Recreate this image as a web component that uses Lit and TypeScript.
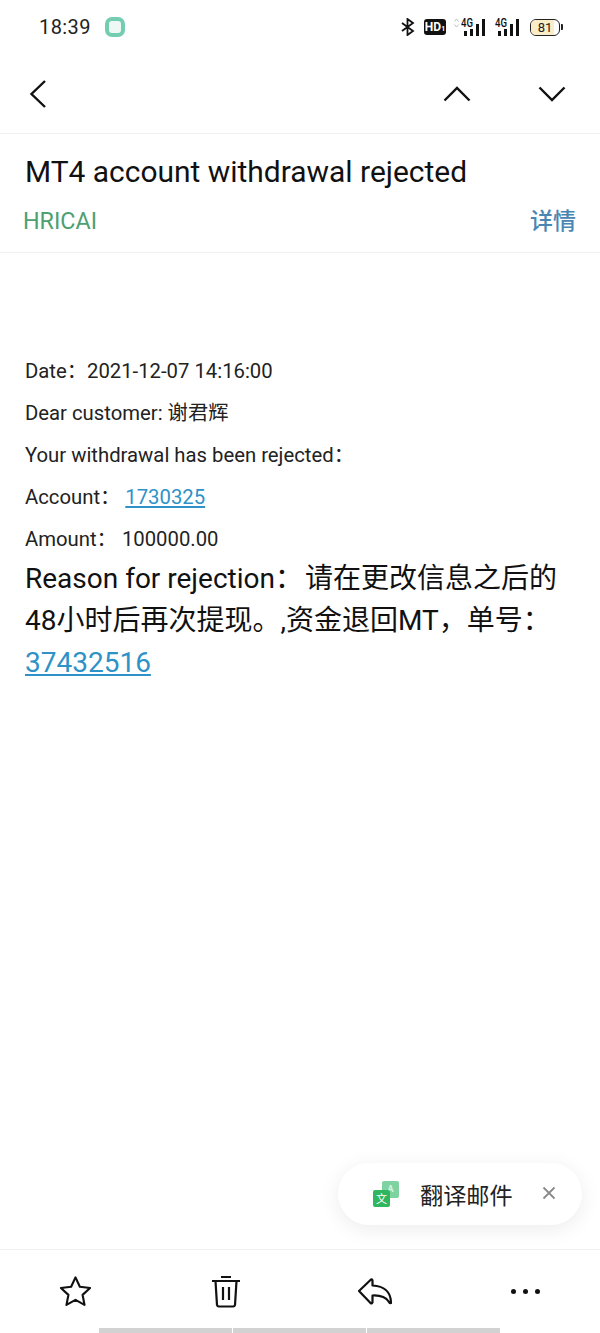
import { css, html, LitElement } from "lit";
import { customElement } from "lit/decorators.js";

@customElement("app-root")
class AppRoot extends LitElement {
  protected render() {
    return html`
      <div class="status">
        <div class="status-left">
          <span class="time">18:39</span>
          <span class="app-dot"></span>
        </div>
        <div class="status-right">
          <svg class="bt" width="14" height="18" viewBox="0 0 14 18" fill="none" stroke="#111" stroke-width="1.8">
            <path d="M1 5l11 8-5.500 4V1l5.500 4-11 8" />
          </svg>
          <span class="hd">HD<small>1</small></span>
          <div class="signal">
            <svg class="arrows" width="5" height="10" viewBox="0 0 5 10" fill="none" stroke="#bdbdbd" stroke-width="1">
              <path d="M.5 3.500L2.500 1l2 2.500M.5 6.500L2.500 9l2-2.500" />
            </svg>
            <span class="net">4G</span>
            ${this.bars()}
          </div>
          <div class="signal second">
            <span class="net">4G</span>
            ${this.bars()}
          </div>
          <div class="battery">
            <span class="shell"><span class="level"></span><span class="pct">81</span></span>
            <span class="cap"></span>
          </div>
        </div>
      </div>

      <nav class="nav">
        <svg width="18" height="30" viewBox="0 0 18 30" fill="none" stroke="#111" stroke-width="2.4">
          <path d="M16 2L2.500 15 16 28" />
        </svg>
        <div class="nav-right">
          <svg width="28" height="16" viewBox="0 0 28 16" fill="none" stroke="#111" stroke-width="2.4">
            <path d="M1.500 14.500L14 2l12.500 12.500" />
          </svg>
          <svg width="28" height="16" viewBox="0 0 28 16" fill="none" stroke="#111" stroke-width="2.4">
            <path d="M1.500 1.500L14 14 26.500 1.500" />
          </svg>
        </div>
      </nav>

      <header class="head">
        <h1>MT4 account withdrawal rejected</h1>
        <div class="sender-row">
          <span class="sender">HRICAI</span>
          <span class="details">详情</span>
        </div>
      </header>

      <main class="body">
        <p>Date：<span class="v">2021-12-07 14:16:00</span></p>
        <p>Dear customer: 谢君辉</p>
        <p>Your withdrawal has been rejected：</p>
        <p>Account：<a class="gap-a">1730325</a></p>
        <p>Amount：<span class="gap-b">100000.00</span></p>
        <div class="reason">
          Reason for rejection：<span class="gap-c">请在更改信息之后的</span><br />48小时后再次提现。,资金退回MT，单号：<br /><a>37432516</a>
        </div>
      </main>

      <div class="translate">
        <svg width="28" height="28" viewBox="0 0 28 28">
          <rect x="10" y="1" width="17" height="17" rx="2" fill="#7fd3a0" />
          <text x="18.500" y="12" font-size="9" font-weight="700" text-anchor="middle" fill="#d9f3e3" font-family="Roboto, sans-serif">A</text>
          <rect x="1" y="10" width="17" height="17" rx="2" fill="#2fb65f" />
          <text x="9.500" y="23" font-size="11" text-anchor="middle" fill="#fff" font-family="'Noto Sans CJK SC', sans-serif">文</text>
        </svg>
        <span class="translate-label">翻译邮件</span>
        <svg class="close" width="14" height="14" viewBox="0 0 14 14" fill="none" stroke="#8a8a8a" stroke-width="1.8">
          <path d="M1.500 1.500l11 11M12.500 1.500l-11 11" />
        </svg>
      </div>

      <footer class="toolbar">
        <svg width="33" height="32" viewBox="0 0 34 32" fill="none" stroke="#111" stroke-width="2.2" stroke-linejoin="round">
          <path d="M17 2l4.500 9.600 10.500 1.300-7.700 7.100 2 10.300L17 25.200 7.700 30.300l2-10.300L2 12.900l10.500-1.300z" />
        </svg>
        <svg class="trash" width="28" height="33" viewBox="0 0 28 33" fill="none" stroke="#111" stroke-width="2.2">
          <path d="M9 2h10M0 6h28M3.500 6l1.500 24a2 2 0 0 0 2 1.500h14a2 2 0 0 0 2-1.500L24.500 6M11 12v13M17 12v13" />
        </svg>
        <svg width="36" height="28" viewBox="0 0 36 28" fill="none" stroke="#111" stroke-width="2.2" stroke-linejoin="round">
          <path d="M2 14L14 2.500Q15 2 15.500 3.500V8.500C27 9 34 15 34 26Q32.500 26.500 32 25C30 21 24 18 15.500 18.500V25.500Q15 27 13.500 26z" />
        </svg>
        <div class="more"><i></i><i></i><i></i></div>
      </footer>

      <div class="home"><i></i><i></i><i></i></div>
    `;
  }

  private bars() {
    return html`<span class="bars">
      ${[5, 7, 12, 17].map((h) => html`<i style="height:${h}px"></i>`)}
    </span>`;
  }

  static styles = css`
    :host {
      display: flex;
      flex-direction: column;
      position: relative;
      height: 1333px;
      width: 600px;
      overflow: hidden;
      background: #fff;
      color: #111;
      font-family: Roboto, "Noto Sans CJK SC", sans-serif;
    }

    .status {
      display: flex;
      justify-content: space-between;
      align-items: center;
      height: 54px;
      padding: 0 37px 0 39px;
      flex: none;
    }

    .status-left {
      display: flex;
      align-items: center;
      gap: 14px;
    }

    .time {
      font-size: 20px;
      letter-spacing: 0.4px;
      color: #222;
    }

    .app-dot {
      width: 20px;
      height: 20px;
      box-sizing: border-box;
      border: 4px solid #74cdb0;
      border-radius: 7px;
      background: #eef9f5;
    }

    .status-right {
      display: flex;
      align-items: center;
      gap: 8px;
    }

    .bt {
      margin-right: 1px;
    }

    .hd {
      display: flex;
      align-items: baseline;
      justify-content: center;
      width: 22px;
      height: 16px;
      line-height: 16px;
      background: #111;
      color: #fff;
      border-radius: 3px;
      font-size: 12px;
      font-weight: 700;
    }

    .hd small {
      font-size: 7px;
    }

    .signal {
      position: relative;
      display: flex;
      align-items: flex-end;
      justify-content: flex-end;
      width: 31px;
      height: 18px;
    }

    .signal.second {
      width: 24px;
      margin-left: 2px;
    }

    .net {
      position: absolute;
      left: 7px;
      top: 0;
      font-size: 12px;
      line-height: 10px;
      font-weight: 500;
      transform: scaleX(0.8);
      transform-origin: left;
    }

    .second .net {
      left: 0;
    }

    .arrows {
      position: absolute;
      left: 0;
      top: 0;
    }

    .bars {
      display: flex;
      align-items: flex-end;
      gap: 3px;
    }

    .bars i {
      display: block;
      width: 3px;
      background: #111;
    }

    .battery {
      display: flex;
      align-items: center;
      gap: 1px;
      margin-left: 3px;
    }

    .shell {
      position: relative;
      display: flex;
      align-items: center;
      justify-content: center;
      box-sizing: border-box;
      width: 30px;
      height: 17px;
      border: 1.500px solid #222;
      border-radius: 6px;
      overflow: hidden;
    }

    .level {
      position: absolute;
      left: 0;
      top: 0;
      bottom: 0;
      width: 81%;
      background: #fbedc6;
    }

    .pct {
      position: relative;
      font-size: 13px;
      color: #222;
    }

    .cap {
      width: 2px;
      height: 6px;
      background: #222;
      border-radius: 0 1px 1px 0;
    }

    .nav {
      display: flex;
      justify-content: space-between;
      align-items: center;
      flex: none;
      height: 80px;
      box-sizing: border-box;
      padding: 0 34px 0 29px;
      border-bottom: 1px solid #f1f1f1;
    }

    .nav-right {
      display: flex;
      align-items: center;
      gap: 67px;
    }

    .head {
      flex: none;
      height: 119px;
      box-sizing: border-box;
      padding: 20px 24px 0 25px;
      border-bottom: 1px solid #f1f1f1;
    }

    h1 {
      margin: 0;
      font-size: 29.950px;
      font-weight: 400;
      line-height: 36px;
      color: #111;
    }

    .sender-row {
      display: flex;
      justify-content: space-between;
      align-items: baseline;
      margin: 12px 0 0 -2px;
      height: 30px;
    }

    .sender {
      font-size: 23.300px;
      color: #4da06f;
    }

    .details {
      font-size: 23px;
      font-weight: 500;
      color: #4a86b2;
    }

    .body {
      flex: 1;
      padding: 97px 25px 0;
    }

    p {
      margin: 0;
      height: 42px;
      line-height: 42px;
      font-size: 20.300px;
      color: #222;
    }

    a {
      color: #2e92c8;
      text-decoration: underline;
    }

    .gap-a {
      margin-left: 5px;
    }

    .gap-b {
      margin-left: 5px;
    }

    .reason {
      margin-top: -2px;
      font-size: 28px;
      line-height: 42px;
      color: #111;
      white-space: nowrap;
    }

    .gap-c {
      margin-left: 2px;
    }

    .translate {
      position: absolute;
      left: 338px;
      top: 1163px;
      width: 244px;
      height: 62px;
      box-sizing: border-box;
      padding-left: 34px;
      display: flex;
      align-items: center;
      background: #fff;
      border-radius: 31px;
      box-shadow: 0 4px 20px rgba(0, 0, 0, 0.08);
    }

    .translate-label {
      margin-left: 20px;
      font-size: 23.200px;
      color: #222;
    }

    .close {
      margin-left: 29px;
      margin-top: -3px;
    }

    .toolbar {
      flex: none;
      display: flex;
      justify-content: space-between;
      align-items: center;
      height: 79px;
      box-sizing: border-box;
      padding: 4px 60px 0 59px;
      border-top: 1px solid #f1f1f1;
    }

    .trash {
      margin: 0 -2px 0 2px;
    }

    .more {
      display: flex;
      gap: 7px;
    }

    .more i {
      width: 5px;
      height: 5px;
      border-radius: 50%;
      background: #111;
    }

    .home {
      flex: none;
      display: flex;
      gap: 1px;
      height: 5px;
      padding-left: 99px;
    }

    .home i {
      width: 133px;
      background: #d2d2d2;
    }
  `;
}

declare global {
  interface HTMLElementTagNameMap {
    "app-root": AppRoot;
  }
}
